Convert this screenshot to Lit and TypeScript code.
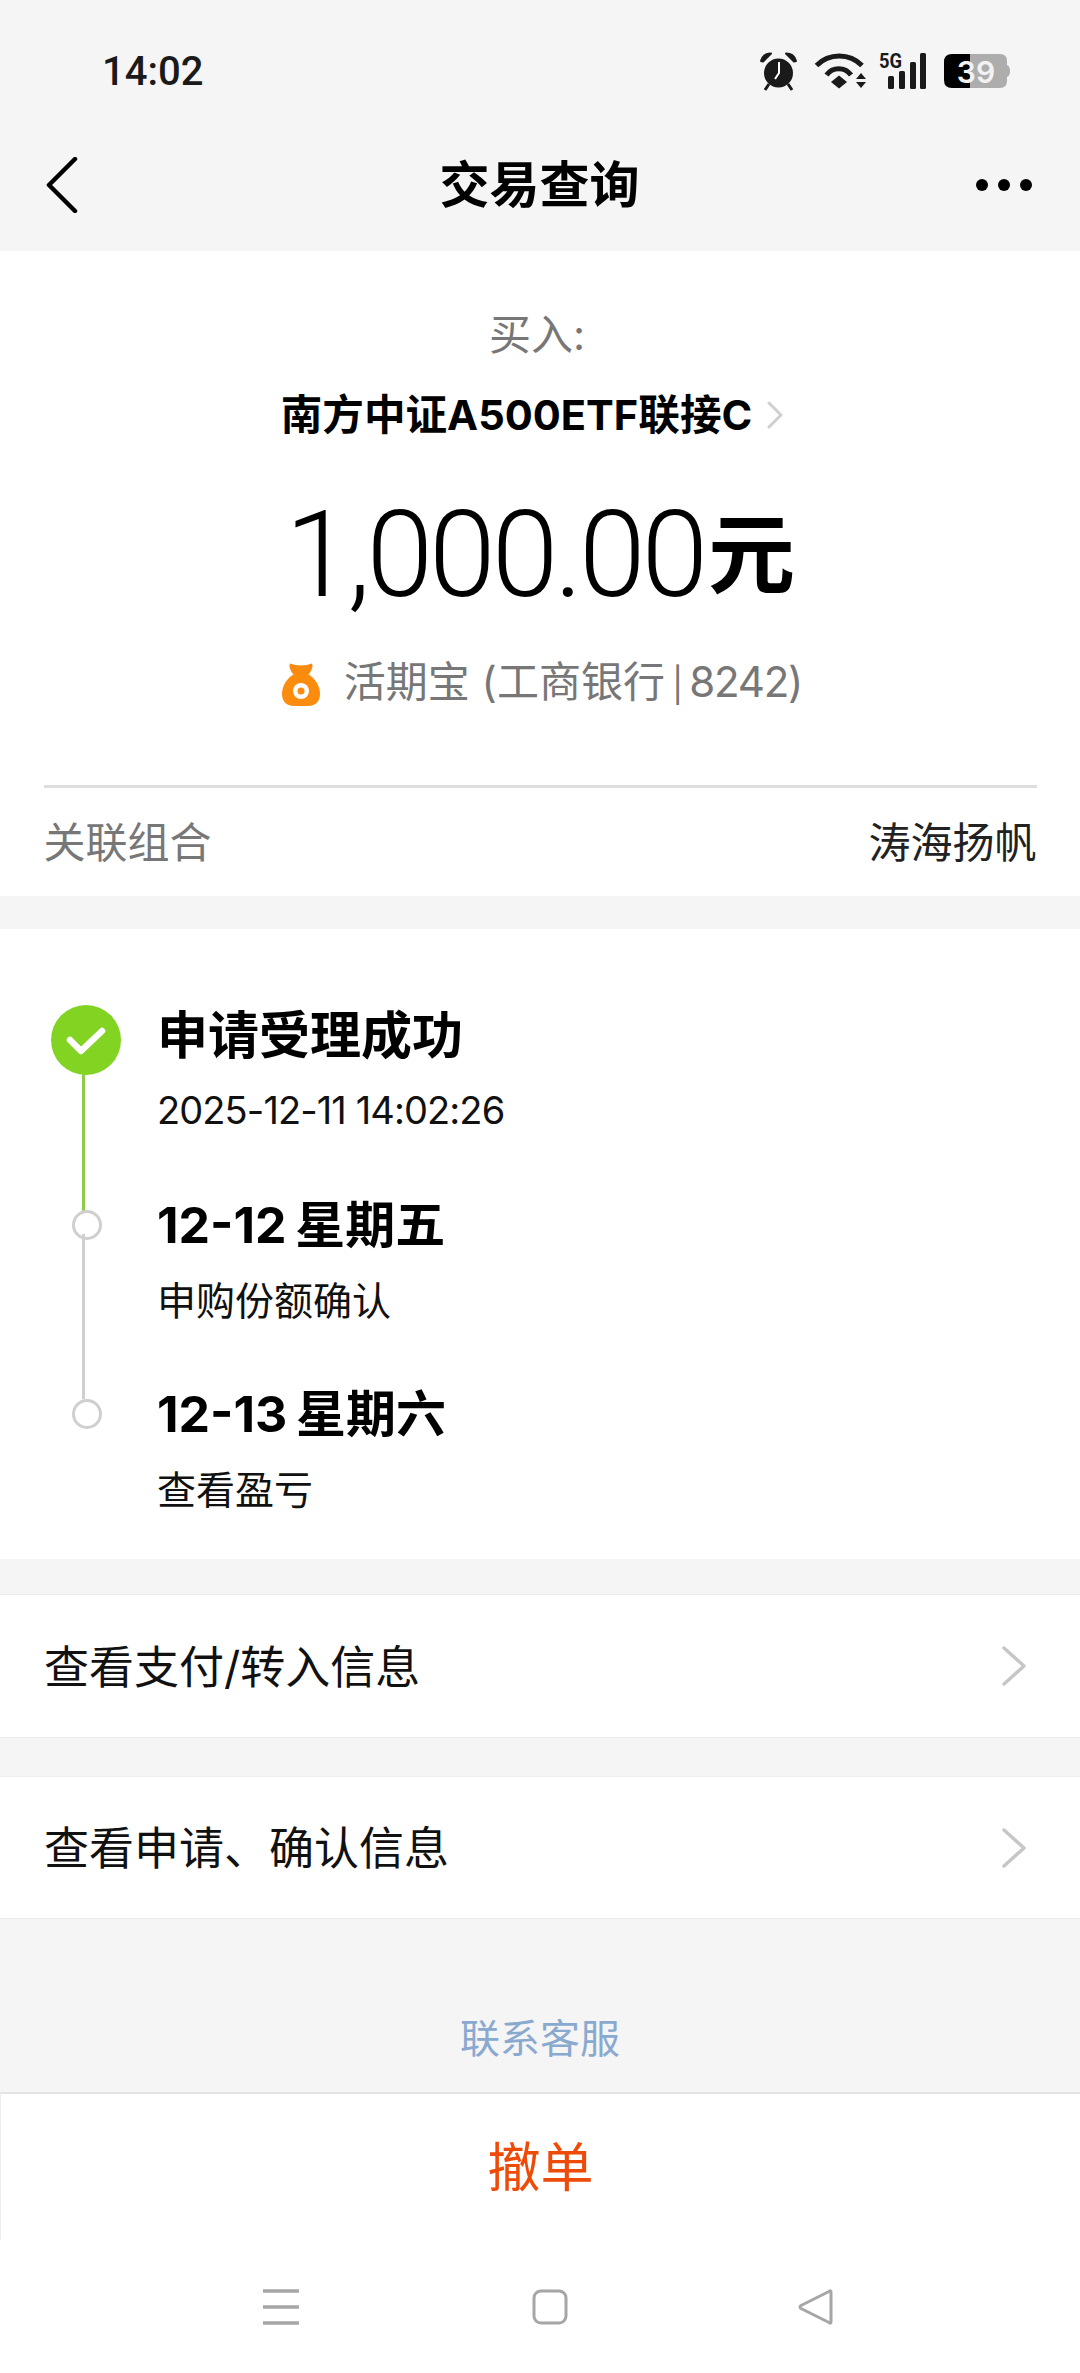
import { LitElement, html, css } from "lit";
import { customElement } from "lit/decorators.js";

const chevron = html`<svg class="row-chev" width="26" height="40" viewBox="0 0 26 40"><path d="M3 2 L23 20 L3 38" fill="none" stroke="#c6c6c6" stroke-width="3.4" stroke-linecap="round" stroke-linejoin="round"/></svg>`;

@customElement("app-root")
export class AppRoot extends LitElement {
  static styles = css`
    :host { display: flex; flex-direction: column; width: 1080px; height: 2373px; background: #f5f5f5; overflow: hidden;
      font-family: Inter, "Noto Sans CJK SC", sans-serif; color: #000; }
    * { box-sizing: border-box; }
    .status { height: 122px; display: flex; align-items: center; justify-content: space-between; padding: 22px 70px 0 102px; }
    .time { font-family: Roboto, sans-serif; font-size: 40px; font-weight: 500; color: #1a1a1a; }
    .status-icons { display: flex; align-items: center; margin-top: -2px; }
    .status-icons svg { display: block; overflow: visible; }
    .alarm { margin-right: 18px; }
    .wifi { margin-right: 13px; }
    .signal { margin-right: 18px; }
    .nav { height: 130px; display: grid; grid-template-columns: 1fr auto 1fr; align-items: center; padding: 0 47px 4px 46px; }
    .nav h1 { margin: 0; font-size: 50px; font-weight: 700; line-height: 60px; }
    .nav svg:last-child { justify-self: end; }
    .white { background: #fff; }
    .summary { display: flex; flex-direction: column; align-items: center; padding-top: 58px; height: 645px; }
    .buy { font-size: 42px; line-height: 52px; color: #777; margin-right: 6px; }
    .fund { display: flex; align-items: center; gap: 15px; margin-top: 28px; margin-right: 16px; font-size: 41.6px; line-height: 52px; font-weight: 700; }
    .amount { margin-top: 52px; height: 124px; display: flex; align-items: center; line-height: 124px; font-family: Roboto, "Noto Sans CJK SC", sans-serif; font-size: 120px; font-weight: 300; letter-spacing: -4px; }
    .amount b { font-family: Inter, "Noto Sans CJK SC", sans-serif; font-size: 87px; line-height: 87px; font-weight: 700; letter-spacing: 0; margin-left: 4px; }
    .pay { display: flex; align-items: center; gap: 24px; margin-top: 38px; margin-left: 4px; font-size: 42px; line-height: 54px; color: #777; }
    .pipe { font-size: 34px; margin: 0 6px 0 7px; }
    .card { letter-spacing: -1.2px; }
    .assoc { margin-top: 73px; width: 993px; border-top: 3px solid #dedede; height: 112px; display: flex; align-items: center; justify-content: space-between; font-size: 42px; padding-bottom: 6px; color: #777; }
    .assoc span:last-child { color: #222; }
    .gap1 { height: 33px; }
    .timeline { height: 630px; position: relative; padding: 77px 0 0 157px; }
    .line { position: absolute; left: 82px; width: 3px; }
    .line.green { top: 145px; height: 137px; background: #8fcb4b; }
    .line.gray { top: 305px; height: 165px; background: #cfcfcf; }
    .step { position: relative; height: 189px; }
    .step h3 { margin: 0; font-weight: 700; font-size: 50px; line-height: 60px; word-spacing: -3px; }
    .step p { margin: 16px 0 0; font-size: 39px; line-height: 60px; color: #111; }
    .step.first h3 { font-size: 51px; }
    .step.first p { font-size: 38px; letter-spacing: -0.9px; margin-top: 14px; }
    .dot { position: absolute; left: -85px; top: 15px; width: 30px; height: 30px; border-radius: 50%; border: 3px solid #cfcfcf; background: transparent; }
    .check { position: absolute; left: -106px; top: -1px; width: 70px; height: 70px; }
    .row { height: 144px; display: flex; align-items: center; justify-content: space-between; padding: 0 53px 0 44px; font-size: 45px; color: #111; border-top: 1px solid #ececec; border-bottom: 1px solid #ececec; }
    .row span { padding-bottom: 4px; }
    .gap2 { height: 35px; }
    .gap3 { height: 38px; }
    .contact { height: 173px; display: flex; align-items: flex-end; justify-content: center; padding-bottom: 27px; font-size: 40px; line-height: 52px; color: #8aa9cf; }
    .bottom { flex: 1; display: flex; flex-direction: column; }
    .cancel { height: 148px; border-top: 2px solid #e4e4e4; border-left: 1px solid #eee; display: flex; align-items: center; justify-content: center; font-size: 53px; color: #ee4a08; padding-bottom: 6px; }
    .sysnav { height: 133px; display: flex; align-items: flex-start; padding: 49px 0 0 263px; }
    .sysnav svg { display: block; }
    .sys-a { margin-right: 233px; }
    .sys-b { margin-right: 230px; }
  `;

  render() {
    return html`
      <div class="status">
        <span class="time">14:02</span>
        <div class="status-icons">
          <svg class="alarm" width="37" height="38" viewBox="0 0 37 38">
            <circle cx="18.5" cy="21" r="14.5" fill="#1a1a1a"/>
            <path d="M1 9 Q3 1.500 11 1.500 L3 9.500 Z M36 9 Q34 1.500 26 1.500 L34 9.500 Z" fill="#1a1a1a" stroke="#1a1a1a" stroke-width="2" stroke-linejoin="round"/>
            <path d="M9 32 L5 38 M28 32 L32 38" stroke="#1a1a1a" stroke-width="3"/>
            <path d="M19 10 V21 L15 27" fill="none" stroke="#fff" stroke-width="2"/>
          </svg>
          <svg class="wifi" width="51" height="37" viewBox="0 0 51 37">
            <path d="M1.500 13.500 A32 32 0 0 1 47 13.500" fill="none" stroke="#1a1a1a" stroke-width="5"/>
            <path d="M11.500 23 A15 15 0 0 1 36 23" fill="none" stroke="#1a1a1a" stroke-width="5"/>
            <path d="M24 23.500 L32 30 L24 36.500 L16 30 Z" fill="#1a1a1a"/>
            <path d="M46 21 L51 27 H41 Z M41 30 H51 L46 36 Z" fill="#1a1a1a"/>
          </svg>
          <svg class="signal" width="47" height="36" viewBox="0 0 47 36">
            <text x="0" y="15" font-family="Roboto, sans-serif" font-size="20" font-weight="700" fill="#1a1a1a" textLength="23" lengthAdjust="spacingAndGlyphs">5G</text>
            <rect x="9" y="23" width="6" height="13" rx="1.500" fill="#1a1a1a"/>
            <rect x="20" y="18" width="6" height="18" rx="1.500" fill="#1a1a1a"/>
            <rect x="31" y="9" width="6" height="27" rx="1.500" fill="#1a1a1a"/>
            <rect x="41" y="0" width="6" height="36" rx="1.500" fill="#1a1a1a"/>
          </svg>
          <svg width="66" height="34" viewBox="0 0 66 34">
            <path d="M8 0 H26 V34 H8 Q0 34 0 26 V8 Q0 0 8 0 Z" fill="#000"/>
            <path d="M26 0 H56 Q63 0 63 7 V27 Q63 34 56 34 H26 Z" fill="#adadad"/>
            <path d="M63 11 Q66 12 66 17 Q66 22 63 23 Z" fill="#adadad"/>
            <text x="32" y="28.500" text-anchor="middle" font-family="Inter, sans-serif" font-size="30" font-weight="600" fill="#f2f2f2">39</text>
          </svg>
        </div>
      </div>
      <div class="nav">
        <svg width="32" height="56" viewBox="0 0 32 56"><path d="M29 2 L3 28 L29 54" fill="none" stroke="#000" stroke-width="4.500" stroke-linecap="round" stroke-linejoin="round"/></svg>
        <h1>交易查询</h1>
        <svg width="58" height="14" viewBox="0 0 58 14"><circle cx="7" cy="7" r="6" fill="#000"/><circle cx="29" cy="7" r="6" fill="#000"/><circle cx="51" cy="7" r="6" fill="#000"/></svg>
      </div>
      <div class="white summary">
        <div class="buy">买入:</div>
        <div class="fund"><span>南方中证A500ETF联接C</span>
          <svg width="16" height="28" viewBox="0 0 16 28"><path d="M2 2 L14 14 L2 26" fill="none" stroke="#d0d0d0" stroke-width="3" stroke-linecap="round" stroke-linejoin="round"/></svg>
        </div>
        <div class="amount"><span>1,000.00</span><b>元</b></div>
        <div class="pay">
          <svg width="38" height="44" viewBox="0 0 38 44">
            <path d="M8 1.500 Q13 3.500 19 3.500 Q25 3.500 30 1.500 Q32 5 27 12 H11 Q6 5 8 1.500 Z" fill="#f98a10"/>
            <path d="M12 12 H26 C33 16 38 24 38 32 C38 40 33 44 26 44 H12 C5 44 0 40 0 32 C0 24 5 16 12 12 Z" fill="#fb8c0e"/>
            <circle cx="19" cy="29" r="8" fill="#fff"/><circle cx="19" cy="29" r="3.500" fill="#fb8c0e"/>
          </svg>
          <span>活期宝 (工商银行<span class="pipe">|</span><span class="card">8242)</span></span>
        </div>
        <div class="assoc"><span>关联组合</span><span>涛海扬帆</span></div>
      </div>
      <div class="gap1"></div>
      <div class="white timeline">
        <div class="line green"></div>
        <div class="line gray"></div>
        <div class="step first">
          <svg class="check" viewBox="0 0 70 70"><circle cx="35" cy="35" r="35" fill="#82d322"/><path d="M19 35 L30 46 L51 26" fill="none" stroke="#fff" stroke-width="6.500" stroke-linecap="round" stroke-linejoin="round"/></svg>
          <h3>申请受理成功</h3><p>2025-12-11 14:02:26</p>
        </div>
        <div class="step"><div class="dot"></div><h3>12-12 星期五</h3><p>申购份额确认</p></div>
        <div class="step"><div class="dot"></div><h3>12-13 星期六</h3><p>查看盈亏</p></div>
      </div>
      <div class="gap2"></div>
      <div class="white row"><span>查看支付/转入信息</span>${chevron}</div>
      <div class="gap3"></div>
      <div class="white row"><span>查看申请、确认信息</span>${chevron}</div>
      <div class="contact">联系客服</div>
      <div class="white bottom">
        <div class="cancel">撤单</div>
        <div class="sysnav">
          <svg class="sys-a" width="36" height="36" viewBox="0 0 36 36"><path d="M0 2 H36 M0 18 H36 M0 34 H36" stroke="#a6a6a6" stroke-width="3.500"/></svg>
          <svg class="sys-b" width="36" height="36" viewBox="0 0 36 36"><rect x="2" y="2" width="32" height="32" rx="7" fill="none" stroke="#a6a6a6" stroke-width="3"/></svg>
          <svg width="36" height="36" viewBox="0 0 36 36"><path d="M33 3 V33 Q33 35 31 33.500 L3 19.500 Q1 18 3 16.500 L31 2.500 Q33 1 33 3 Z" fill="none" stroke="#a6a6a6" stroke-width="3" stroke-linejoin="round"/></svg>
        </div>
      </div>
    `;
  }
}
